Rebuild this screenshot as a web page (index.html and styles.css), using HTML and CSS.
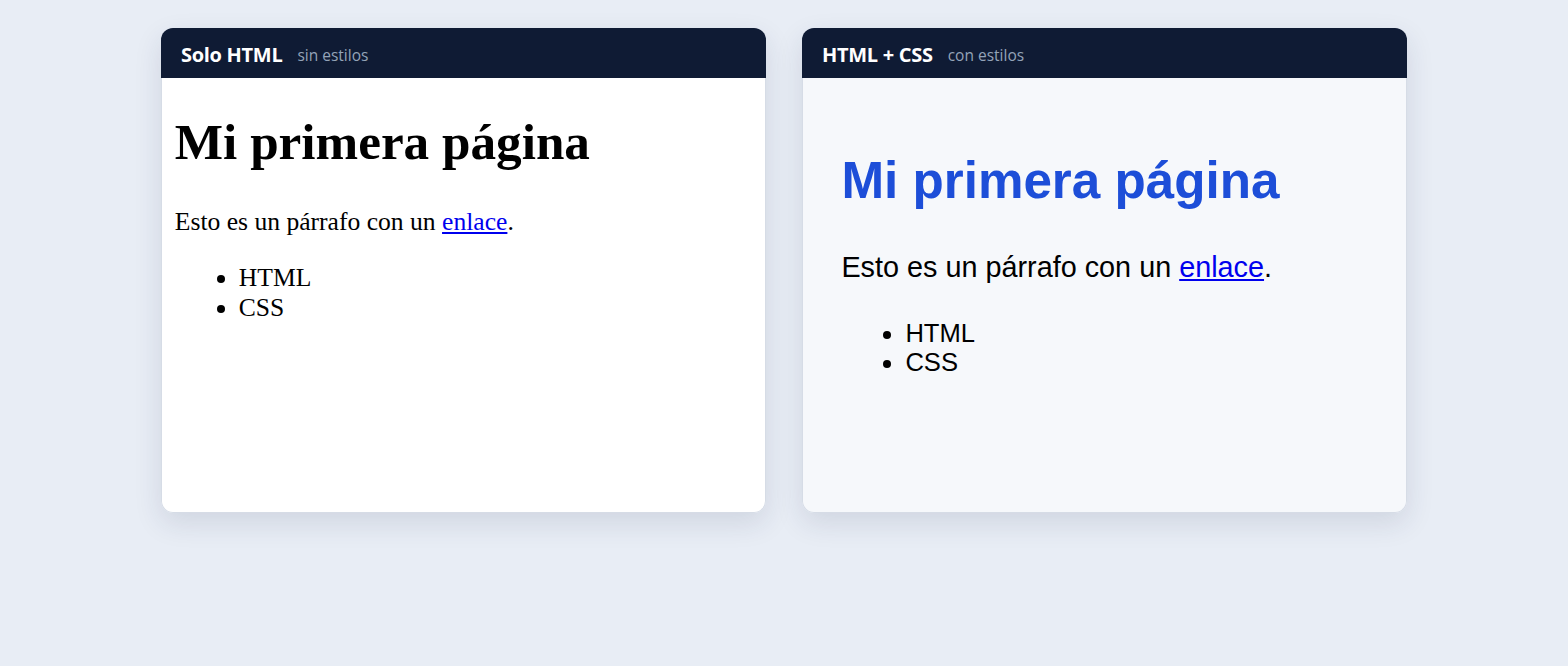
FILE: index.html
```html
<!DOCTYPE html>
<html lang="es">
<head>
<meta charset="utf-8">
<title>Solo HTML vs HTML + CSS</title>
<link rel="stylesheet" href="styles.css">
</head>
<body>
<main class="stage">
  <section class="card">
    <header class="card-head">
      <span class="card-title">Solo HTML</span>
      <span class="card-sub">sin estilos</span>
    </header>
    <div class="preview plain">
      <h1>Mi primera página</h1>
      <p>Esto es un párrafo con un <a href="#">enlace</a>.</p>
      <ul>
        <li>HTML</li>
        <li>CSS</li>
      </ul>
    </div>
  </section>
  <section class="card">
    <header class="card-head">
      <span class="card-title">HTML + CSS</span>
      <span class="card-sub">con estilos</span>
    </header>
    <div class="preview styled">
      <h1>Mi primera página</h1>
      <p>Esto es un párrafo con un <a href="#">enlace</a>.</p>
      <ul>
        <li>HTML</li>
        <li>CSS</li>
      </ul>
    </div>
  </section>
</main>
</body>
</html>
```

FILE: styles.css
```css
html, body {
  margin: 0;
  height: 100%;
}

body {
  background: #e8edf5;
  font-family: "Open Sans", "Noto Sans", sans-serif;
}

.stage {
  display: flex;
  justify-content: center;
  align-items: flex-start;
  gap: 36px;
  padding-top: 28px;
}

.card {
  width: 605px;
  height: 485px;
  border-radius: 12px;
  overflow: hidden;
  box-shadow: 0 10px 28px rgba(30, 45, 80, 0.12);
  display: flex;
  flex-direction: column;
}

.card-head {
  flex: 0 0 auto;
  height: 50px;
  box-sizing: border-box;
  background: #0f1b34;
  padding: 3px 20px 0;
  display: flex;
  align-items: center;
  gap: 15px;
}

.card-title {
  color: #ffffff;
  font-size: 20px;
  font-weight: 700;
  letter-spacing: -0.3px;
}

.card-sub {
  color: #94a3b8;
  font-size: 15.5px;
}

.preview {
  flex: 1 1 auto;
  border: 1px solid #d6dce6;
  border-top: 0;
  border-radius: 0 0 12px 12px;
}

/* Browser defaults, drawn at 1.6x */
.plain {
  background: #ffffff;
  font-family: "Liberation Serif", "Times New Roman", serif;
  font-size: 25.6px;
  padding: 0 12.8px;
  color: #000000;
}

.plain h1 {
  font-size: 51.2px;
  margin: 33.5px 0 36.5px;
}

.plain p {
  margin: 25.6px 0;
}

.plain ul {
  margin: 25.6px 0;
  padding-left: 64px;
}

.plain a,
.styled a {
  color: #0000ee;
}

/* Styled version, drawn at 1.6x */
.styled {
  background: #f6f8fb;
  font-family: "Liberation Sans", Arial, sans-serif;
  font-size: 25.6px;
  padding: 38.4px;
  color: #000000;
}

.styled h1 {
  font-size: 51.2px;
  color: #1d4ed8;
  margin: 34.3px 0;
}

.styled p {
  font-size: 28.8px;
  line-height: 1.6;
  margin: 28.8px 0;
}

.styled ul {
  margin: 28.8px 0;
  padding-left: 64px;
}
```
